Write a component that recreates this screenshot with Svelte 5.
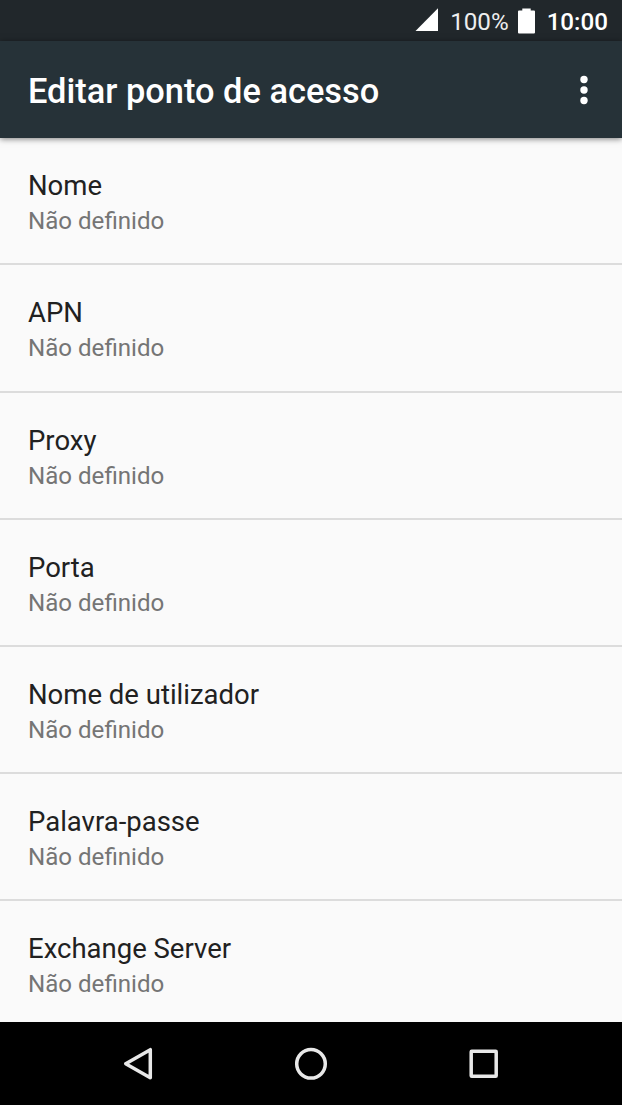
<script>
  const fields = ['Nome', 'APN', 'Proxy', 'Porta', 'Nome de utilizador', 'Palavra-passe', 'Exchange Server'];
</script>

<div class="screen">
  <div class="status">
    <svg class="signal" width="24" height="24" viewBox="0 0 24 24"><path d="M0.5 23L23 0.2V23Z" fill="#fff" /></svg>
    <span class="percent">100%</span>
    <svg class="battery" width="17" height="26" viewBox="0 0 17 26"><path d="M4.3 0.5H12.7V2.5H16Q17 2.5 17 3.5V24.5Q17 25.5 16 25.5H1Q0 25.5 0 24.5V3.5Q0 2.5 1 2.5H4.3Z" fill="#fff" /></svg>
    <span class="clock">10:00</span>
  </div>
  <header>
    <h1>Editar ponto de acesso</h1>
    <svg width="8" height="30" viewBox="0 0 8 30" fill="#fff"><circle cx="4" cy="4.5" r="3.7" /><circle cx="4" cy="15" r="3.7" /><circle cx="4" cy="25.5" r="3.7" /></svg>
  </header>
  <main>
    {#each fields as field}
      <div class="row">
        <div class="name">{field}</div>
        <div class="value">Não definido</div>
      </div>
    {/each}
  </main>
  <nav>
    <svg width="32" height="36" viewBox="0 0 32 36"><path d="M28.3 3.7V31.7L3.7 17.7Z" /></svg>
    <svg width="36" height="36" viewBox="0 0 36 36"><circle cx="18" cy="17.8" r="14.3" /></svg>
    <svg width="32" height="36" viewBox="0 0 32 36"><rect x="3.2" y="5.2" width="25" height="25" rx="0.5" /></svg>
  </nav>
</div>

<style>
  :global(body) { margin: 0; }
  .screen { width: 622px; height: 1105px; display: flex; flex-direction: column; overflow: hidden; background: #fafafa; font-family: Roboto, sans-serif; }
  .status { flex: none; height: 41px; box-sizing: border-box; padding: 2px 14px 0 0; display: flex; justify-content: flex-end; align-items: center; background: #21272b; color: #fff; font-size: 24.2px; }
  .signal { margin: -3px 11px 0 0; }
  .battery { margin: -2px 12px 0 0; }
  .percent { margin-right: 9px; color: #eee; }
  .clock { font-weight: 500; }
  header { flex: none; height: 97px; box-sizing: border-box; padding: 0 34px 0 28px; display: flex; align-items: center; justify-content: space-between; background: #263238; color: #fff; box-shadow: 0 1px 6px rgba(0,0,0,.5); z-index: 1; }
  h1 { margin: 2px 0 0; font-size: 34.4px; line-height: 44px; font-weight: 500; }
  main { flex: 1; min-height: 0; box-sizing: border-box; padding-top: 0.3px; overflow: hidden; }
  .row { height: 127.15px; box-sizing: border-box; padding: 30px 28px 0; border-bottom: 2px solid #dcdcdc; }
  .name { font-size: 27.5px; line-height: 35px; color: #212121; }
  .value { font-size: 24.1px; line-height: 37px; color: #757575; }
  nav { flex: none; height: 83px; display: flex; align-items: center; justify-content: center; gap: 139px; background: #000; }
  nav svg { fill: none; stroke: #e8e8e8; stroke-width: 3.5; stroke-linejoin: round; }
</style>
